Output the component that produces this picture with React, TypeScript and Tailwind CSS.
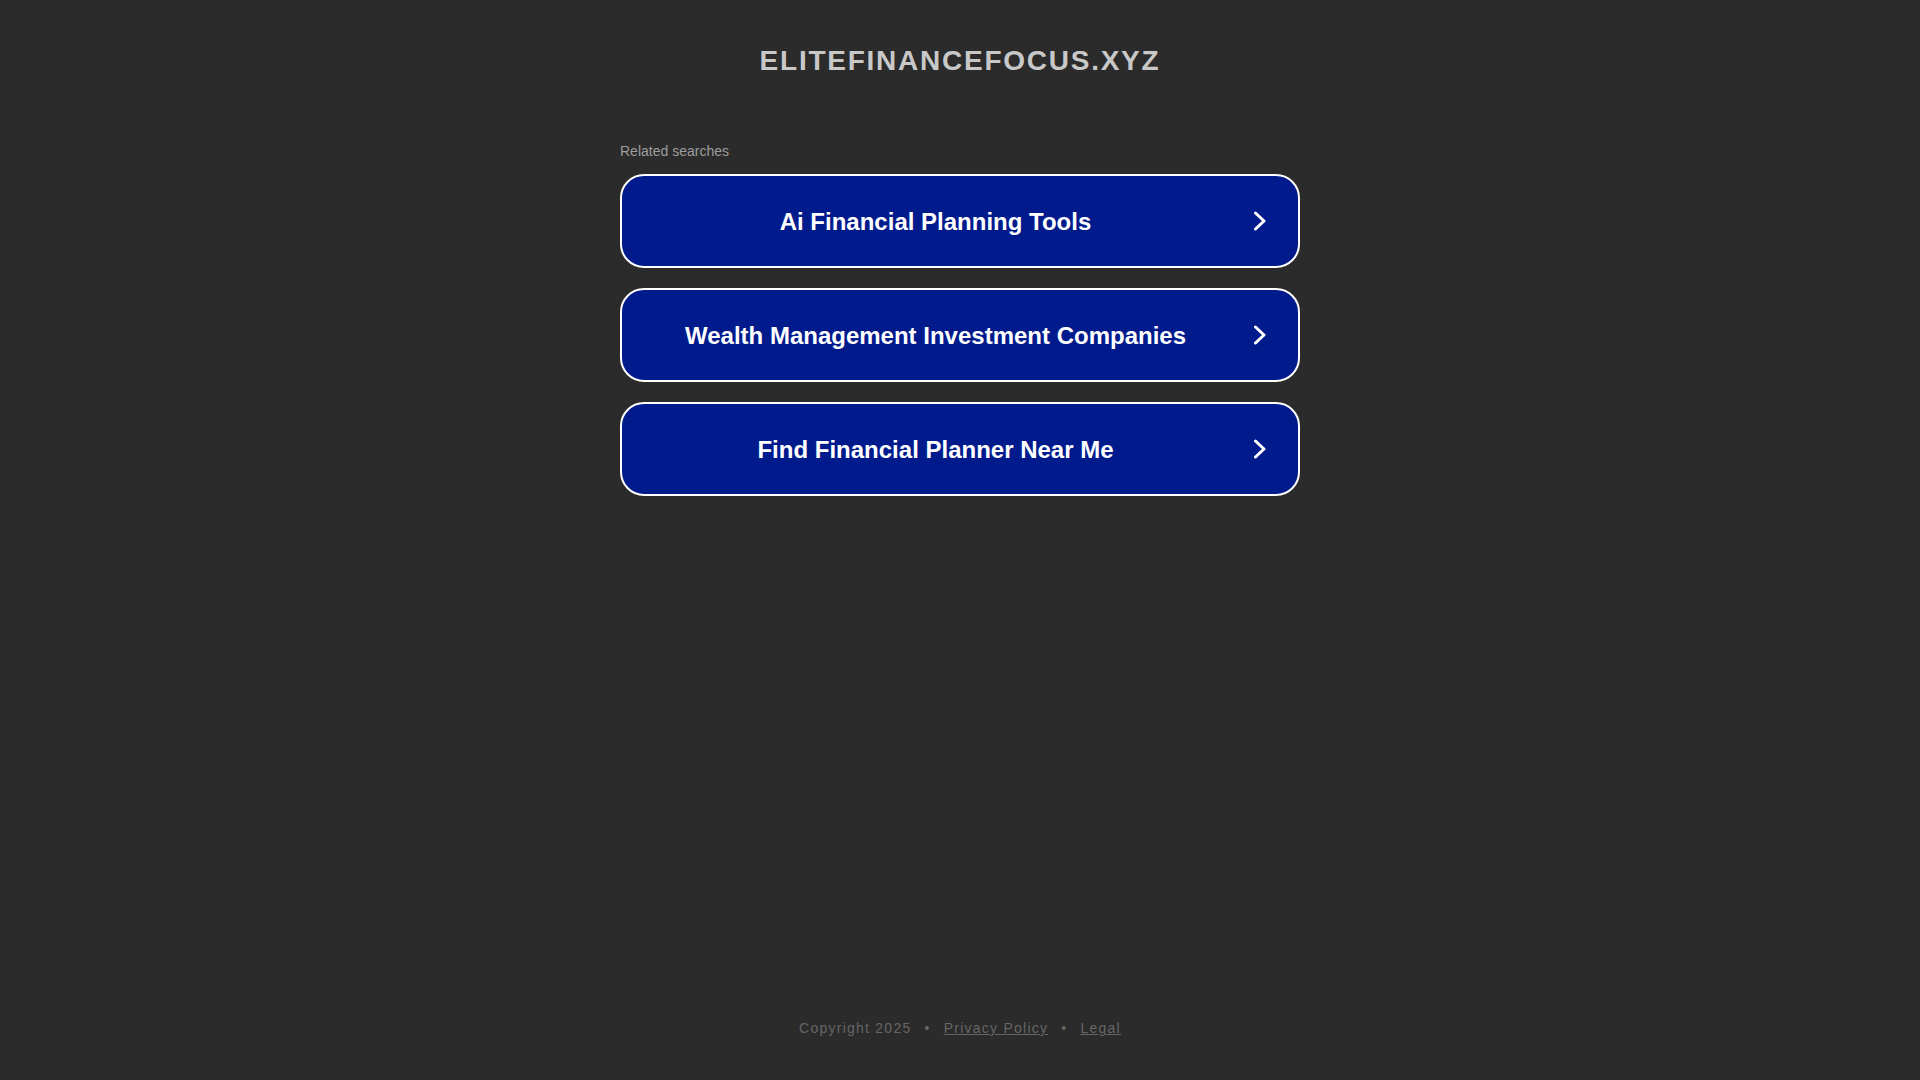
import React from 'react';

const searches = [
  "Ai Financial Planning Tools",
  "Wealth Management Investment Companies",
  "Find Financial Planner Near Me",
];

function Chevron() {
  return (
    <svg width="14" height="20" viewBox="0 0 14 20" fill="none" className="shrink-0">
      <path d="M2.5 2 L11 10 L2.5 18" stroke="white" strokeWidth="3" strokeLinecap="round" strokeLinejoin="round" />
    </svg>
  );
}

export default function App() {
  return (
    <div className="min-h-screen w-full bg-[#2b2b2b] flex flex-col items-center font-['Liberation_Sans',Arial,sans-serif]">
      <h1 className="pt-[45px] text-[28px] leading-[32px] font-bold tracking-[1.75px] text-[#c8c8c8]">
        ELITEFINANCEFOCUS.XYZ
      </h1>

      <div className="w-[680px] mt-[66px]">
        <div className="text-[14px] leading-[16px] text-[#9d9d9d]">Related searches</div>
        <div className="mt-[15px] flex flex-col gap-[20px]">
          {searches.map((s) => (
            <a
              key={s}
              href="#"
              className="h-[94px] flex items-center border-2 border-white rounded-[24px] bg-[#011a8c] pr-[31px]"
            >
              <span className="flex-1 mr-[4px] pt-[2px] text-center text-[24px] font-bold text-white">{s}</span>
              <Chevron />
            </a>
          ))}
        </div>
      </div>

      <footer className="mt-auto pb-[42px] text-[14px] leading-[20px] tracking-[1.25px] text-[#666666] flex items-center">
        <span>Copyright 2025</span>
        <span className="mx-[13px]">•</span>
        <a href="#" className="underline">Privacy Policy</a>
        <span className="mx-[13px]">•</span>
        <a href="#" className="underline">Legal</a>
      </footer>
    </div>
  );
}
